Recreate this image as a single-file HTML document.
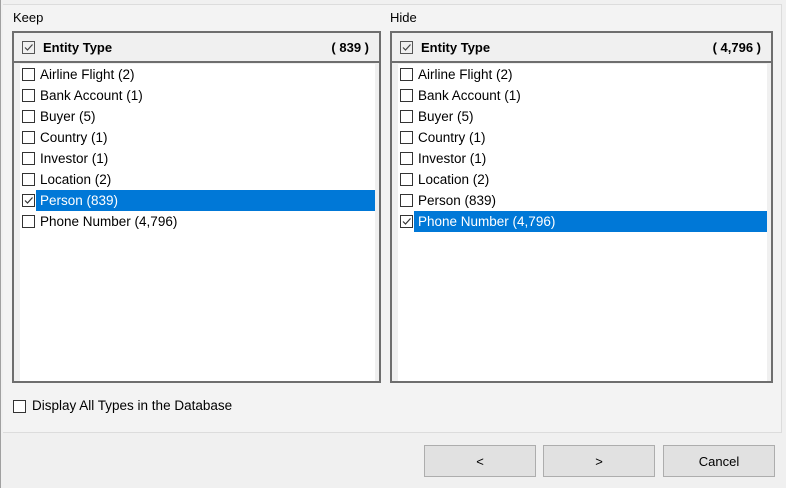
<!DOCTYPE html>
<html><head><style>
*{margin:0;padding:0;box-sizing:border-box}
body{width:786px;height:488px;background:#f0f0f0;position:relative;overflow:hidden;font-family:"Liberation Sans",sans-serif;font-size:13.5px;color:#000}
.a{position:absolute}
.panel{left:3px;top:4px;width:779px;height:429px;background:#f3f3f3;border:1px solid #dcdcdc;border-left:none}
.lbl{font-size:13px}
.box{border:2px solid #6e6e6e;background:#f0f0f0}
.hdr{height:30px;border-bottom:2px solid #6e6e6e;background:#f0f0f0;position:relative}
.hdr b{position:absolute;left:29px;top:7px;font-size:13px}
.hdr .c{position:absolute;right:10px;top:7px;font-weight:bold;font-size:13px}
.list{position:absolute;top:31px;left:6px;right:4px;bottom:0;background:#fff}
.row{height:21px;line-height:21px;position:relative;padding-left:20px;white-space:nowrap}
.row.sel span.t{background:#0078d7;color:#fff;display:block;margin-left:-4px;padding-left:4px}
.cb{position:absolute;width:13px;height:13px;border:1px solid #333;background:#fff}
.cb svg{position:absolute;left:0;top:0}
.row .cb{left:2px;top:4px}
.btn{position:absolute;top:445px;height:32px;background:#e1e1e1;border:1px solid #adadad;text-align:center;line-height:31px;font-size:13px}
</style></head><body>
<div class="a" style="left:0;top:0;width:1px;height:488px;background:#a0a0a0"></div>
<div class="a panel"></div>
<div class="a lbl" style="left:13px;top:10px">Keep</div>
<div class="a lbl" style="left:390px;top:10px">Hide</div>

<div class="a box" style="left:12px;top:31px;width:369px;height:352px">
 <div class="hdr"><div class="cb" style="left:8px;top:8px;background:transparent;border-color:#555"><svg width="11" height="11"><path d="M2 5.5 L4.5 8 L9.5 2.5" stroke="#444" fill="none" stroke-width="1.2"/></svg></div><b>Entity Type</b><span class="c">( 839 )</span></div>
 <div class="list">
  <div class="row"><span class="cb"></span><span class="t">Airline Flight (2)</span></div>
  <div class="row"><span class="cb"></span><span class="t">Bank Account (1)</span></div>
  <div class="row"><span class="cb"></span><span class="t">Buyer (5)</span></div>
  <div class="row"><span class="cb"></span><span class="t">Country (1)</span></div>
  <div class="row"><span class="cb"></span><span class="t">Investor (1)</span></div>
  <div class="row"><span class="cb"></span><span class="t">Location (2)</span></div>
  <div class="row sel"><span class="cb"><svg width="11" height="11"><path d="M2 5.5 L4.5 8 L9.5 2.5" stroke="#333" fill="none" stroke-width="1.2"/></svg></span><span class="t">Person (839)</span></div>
  <div class="row"><span class="cb"></span><span class="t">Phone Number (4,796)</span></div>
 </div>
</div>

<div class="a box" style="left:390px;top:31px;width:383px;height:352px">
 <div class="hdr"><div class="cb" style="left:8px;top:8px;background:transparent;border-color:#555"><svg width="11" height="11"><path d="M2 5.5 L4.5 8 L9.5 2.5" stroke="#444" fill="none" stroke-width="1.2"/></svg></div><b>Entity Type</b><span class="c">( 4,796 )</span></div>
 <div class="list">
  <div class="row"><span class="cb"></span><span class="t">Airline Flight (2)</span></div>
  <div class="row"><span class="cb"></span><span class="t">Bank Account (1)</span></div>
  <div class="row"><span class="cb"></span><span class="t">Buyer (5)</span></div>
  <div class="row"><span class="cb"></span><span class="t">Country (1)</span></div>
  <div class="row"><span class="cb"></span><span class="t">Investor (1)</span></div>
  <div class="row"><span class="cb"></span><span class="t">Location (2)</span></div>
  <div class="row"><span class="cb"></span><span class="t">Person (839)</span></div>
  <div class="row sel"><span class="cb"><svg width="11" height="11"><path d="M2 5.5 L4.5 8 L9.5 2.5" stroke="#333" fill="none" stroke-width="1.2"/></svg></span><span class="t">Phone Number (4,796)</span></div>
 </div>
</div>

<div class="a cb" style="left:13px;top:400px"></div>
<div class="a" style="left:32px;top:398px;font-size:13.5px">Display All Types in the Database</div>

<div class="btn" style="left:424px;width:112px">&lt;</div>
<div class="btn" style="left:543px;width:112px">&gt;</div>
<div class="btn" style="left:663px;width:112px">Cancel</div>
</body></html>
